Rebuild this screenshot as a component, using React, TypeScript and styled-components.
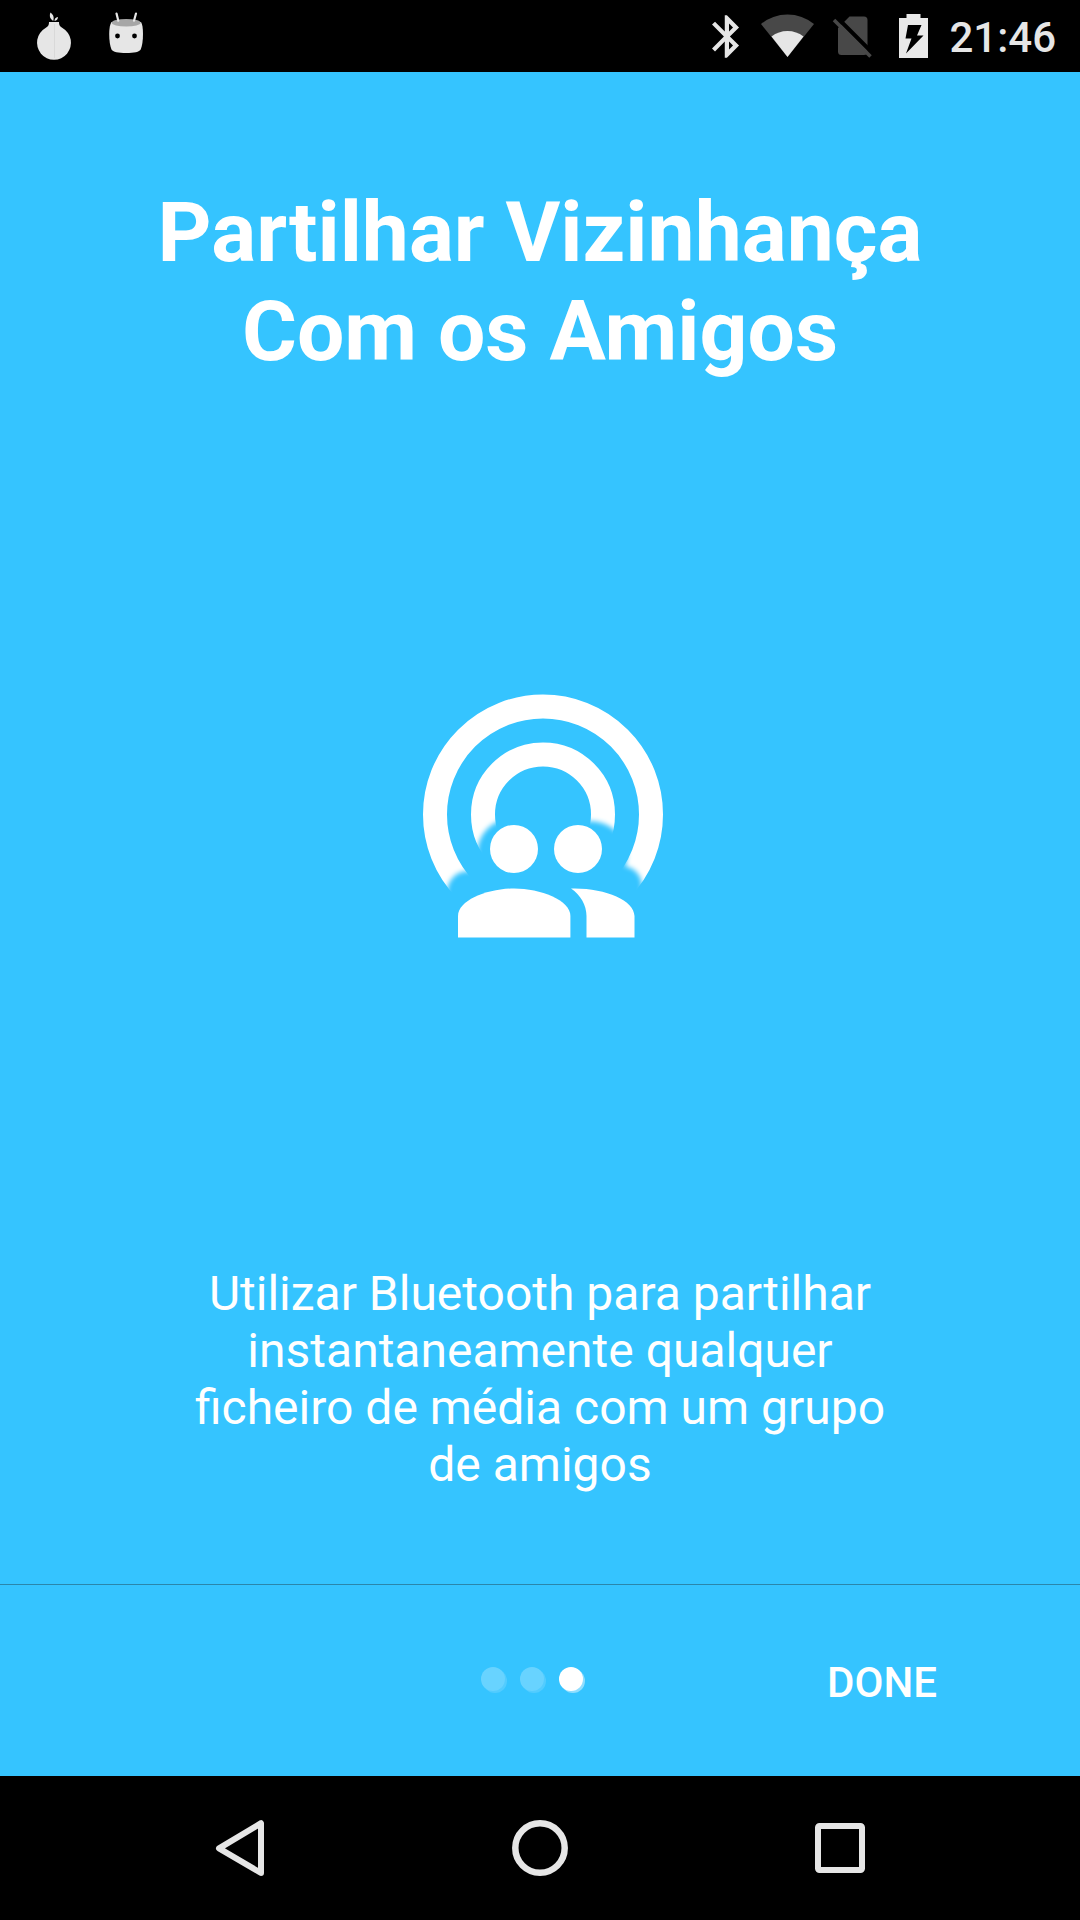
import React, { useState } from 'react';
import styled, { createGlobalStyle } from 'styled-components';

const GlobalStyle = createGlobalStyle`
  *, *::before, *::after { box-sizing: border-box; }
  body {
    margin: 0;
    background: #000;
    color: #fff;
    font-family: Roboto, "Noto Sans", sans-serif;
  }
  button { font: inherit; color: inherit; }
`;

const Screen = styled.div`
  display: flex;
  flex-direction: column;
  min-height: 100vh;
`;

const StatusBar = styled.header`
  display: flex;
  justify-content: space-between;
  height: 72px;
  padding: 0 24px;
  background: #000;
  color: #e6e6e6;
`;

const StatusGroup = styled.div<{ $gap?: number }>`
  display: flex;
  align-items: center;
  gap: ${({ $gap = 0 }) => $gap}px;
`;

const Clock = styled.time`
  padding: 4px 0 0 7px;
  font-size: 42px;
  line-height: 50px;
  font-weight: 500;
`;

const Slide = styled.main`
  flex: 1;
  display: flex;
  flex-direction: column;
  align-items: center;
  background: #35c4ff;
  padding: 111px 96px 91px;
  text-align: center;
`;

const Title = styled.h1`
  margin: 0;
  font-size: 84px;
  line-height: 99px;
  font-weight: 700;
`;

const Artwork = styled.div`
  flex: 1;
  display: flex;
  align-items: center;
  justify-content: center;
`;

const Description = styled.p`
  margin: 0;
  max-width: 704px;
  font-size: 48px;
  line-height: 57px;
`;

const Footer = styled.footer`
  display: grid;
  grid-template-columns: 1fr auto 1fr;
  align-items: center;
  height: 192px;
  background: #35c4ff;
  border-top: 1px solid #2b86ab;
`;

const Dots = styled.div`
  grid-column: 2;
  display: flex;
  gap: 15px;
  padding: 0 17px 3px 0;
`;

const Dot = styled.button<{ $active: boolean }>`
  width: 24px;
  height: 24px;
  padding: 0;
  border: 0;
  border-radius: 50%;
  background: ${({ $active }) => ($active ? '#fff' : '#68d3ff')};
  box-shadow: 2px 2px 0 ${({ $active }) => ($active ? '#90deff' : '#52ccff')};
`;

const DoneButton = styled.button`
  justify-self: end;
  margin-right: 119px;
  padding: 4px 24px 0;
  border: 0;
  background: none;
  font-size: 42px;
  line-height: 50px;
  font-weight: 500;
  text-transform: uppercase;
`;

const NavBar = styled.nav`
  display: flex;
  height: 144px;
  padding: 0 90px;
  background: #000;
`;

const NavButton = styled.button`
  flex: 1;
  display: flex;
  align-items: center;
  justify-content: center;
  padding: 0;
  border: 0;
  background: none;
  color: #e6e6e6;
`;

const OnionIcon = () => (
  <svg width="60" height="72" viewBox="24 0 60 72" fill="#e6e6e6" aria-hidden="true">
    <path d="M49 22h10c0 3 .6 4.500 3.500 6A17 17 0 1 1 45.500 28C48.400 26.500 49 25 49 22z" />
    <path d="M53.200 21C49.500 18.500 49.300 15.500 50.500 12.500c3.200 2.500 3.700 5 2.700 8.500z" />
    <path d="M54.500 21c0-2.500 1-3.500 3.500-4-.2 2.300-1.200 3.500-3.500 4z" />
    <path d="M54.500 24v34" stroke="#d9d9d9" strokeWidth="1" />
  </svg>
);

const MarshmallowIcon = () => (
  <svg width="60" height="72" viewBox="96 0 60 72" aria-hidden="true">
    <path d="M111.500 22h29.500c1.300 2 2 6 2 12s-.8 12-2.300 15.500C139.500 52 134 53 126.200 53s-13.500-1-14.700-3.500C110 46 109.200 40 109.200 34s.9-10 2.300-12z" fill="#e6e6e6" />
    <ellipse cx="126.200" cy="22.700" rx="14.500" ry="3.800" fill="#a6a6a6" />
    <path d="M116.500 13.500l1.800 7.200M136 13.500l-2 7.200" stroke="#e6e6e6" strokeWidth="2.200" strokeLinecap="round" />
    <circle cx="117.500" cy="36" r="2.400" />
    <circle cx="134.500" cy="36" r="2.400" />
  </svg>
);

const BluetoothIcon = () => (
  <svg width="62" height="72" viewBox="4 0 62 72" fill="#e6e6e6" aria-hidden="true">
    <path
      transform="translate(11.400 11) scale(2.125)"
      d="M17.710 7.710L12 2h-1v7.590L6.410 5 5 6.410 10.590 12 5 17.590 6.410 19 11 14.410V22h1l5.710-5.710-4.300-4.290 4.300-4.290zM13 5.830l1.880 1.880L13 9.590V5.830zm1.880 10.460L13 18.170v-3.760l1.880 1.880z"
    />
  </svg>
);

const WifiIcon = () => (
  <svg width="62" height="72" viewBox="66 0 62 72" aria-hidden="true">
    <path d="M97.500 57L71 24A42 42 0 0 1 124 24z" fill="#484848" />
    <path d="M97.500 57L81.500 36.500A26 26 0 0 1 113.500 36.500z" fill="#e6e6e6" />
  </svg>
);

const NoSimIcon = () => (
  <svg width="62" height="72" viewBox="128 0 62 72" aria-hidden="true">
    <path d="M159.500 16.500H174a3.500 3.500 0 0 1 3.500 3.500v31.500a3.500 3.500 0 0 1-3.500 3.500h-22.500a3.500 3.500 0 0 1-3.500-3.500V28z" fill="#484848" />
    <path d="M145.500 16L184 54.500" stroke="#000" strokeWidth="4" />
    <path d="M144 20l36.500 36.500" stroke="#484848" strokeWidth="3.600" />
  </svg>
);

const BatteryIcon = () => (
  <svg width="62" height="72" viewBox="190 0 62 72" aria-hidden="true">
    <path d="M216.500 14h14v4H238v40h-29V18h7.500z" fill="#e9e9e9" />
    <path d="M218 25h13.500l-4.500 10.500h6.500L216 53.500l5.500-15h-6z" />
  </svg>
);

const NearbyShareArt = () => (
  <svg width="288" height="288" viewBox="-4 -1 288 288" role="img" aria-label="Partilhar com amigos">
    <defs>
      <filter id="soft" x="-20%" y="-20%" width="140%" height="140%">
        <feGaussianBlur stdDeviation="2.500" />
      </filter>
      <mask id="cutout" maskUnits="userSpaceOnUse" x="0" y="0" width="280" height="280">
        <rect width="280" height="280" fill="#fff" />
        <g filter="url(#soft)">
          <circle cx="113" cy="174" r="36" />
          <ellipse cx="190" cy="176" rx="37" ry="35" />
          <rect x="78" y="172" width="140" height="90" />
          <circle cx="68" cy="212" r="21" />
          <circle cx="222" cy="206" r="20" />
          <rect x="0" y="214" width="280" height="70" />
        </g>
      </mask>
    </defs>
    <g mask="url(#cutout)" fill="none" stroke="#fff" strokeWidth="24">
      <circle cx="143" cy="134.500" r="108" />
      <circle cx="143" cy="134.500" r="60" />
    </g>
    <g fill="#fff">
      <circle cx="114" cy="169" r="24" />
      <circle cx="178" cy="169" r="24" />
      <path d="M58 257.500V236c0-16 30-27.500 56.200-27.500S170.400 220 170.400 236v21.500z" />
      <path d="M186.500 257.500V236c0-11-6-21-15.500-27.500 33-1 63.500 11.500 63.500 27.500v21.500z" />
    </g>
  </svg>
);

const BackIcon = () => (
  <svg width="60" height="60" viewBox="0 0 60 60" fill="none" stroke="currentColor" strokeWidth="6" strokeLinejoin="round" aria-hidden="true">
    <path d="M9 30.300L51 5.200V55z" />
  </svg>
);

const HomeIcon = () => (
  <svg width="60" height="60" viewBox="0 0 60 60" fill="none" stroke="currentColor" strokeWidth="6.500" aria-hidden="true">
    <circle cx="30" cy="30" r="24.700" />
  </svg>
);

const RecentsIcon = () => (
  <svg width="60" height="60" viewBox="0 0 60 60" fill="none" stroke="currentColor" strokeWidth="6" aria-hidden="true">
    <rect x="8" y="8" width="44" height="44" rx="1.500" />
  </svg>
);

const SLIDES = [0, 1, 2];

export default function App() {
  const [current, setCurrent] = useState(2);

  return (
    <>
      <GlobalStyle />
      <Screen>
        <StatusBar>
          <StatusGroup $gap={12}>
            <OnionIcon />
            <MarshmallowIcon />
          </StatusGroup>
          <StatusGroup>
            <BluetoothIcon />
            <WifiIcon />
            <NoSimIcon />
            <BatteryIcon />
            <Clock dateTime="21:46">21:46</Clock>
          </StatusGroup>
        </StatusBar>
        <Slide>
          <Title>Partilhar Vizinhança Com os Amigos</Title>
          <Artwork>
            <NearbyShareArt />
          </Artwork>
          <Description>
            Utilizar Bluetooth para partilhar instantaneamente qualquer ficheiro de média com um grupo de amigos
          </Description>
        </Slide>
        <Footer>
          <Dots>
            {SLIDES.map((slide) => (
              <Dot
                key={slide}
                type="button"
                $active={slide === current}
                aria-label={`${slide + 1}`}
                onClick={() => setCurrent(slide)}
              />
            ))}
          </Dots>
          <DoneButton type="button">Done</DoneButton>
        </Footer>
        <NavBar>
          <NavButton type="button" aria-label="Back">
            <BackIcon />
          </NavButton>
          <NavButton type="button" aria-label="Home">
            <HomeIcon />
          </NavButton>
          <NavButton type="button" aria-label="Recents">
            <RecentsIcon />
          </NavButton>
        </NavBar>
      </Screen>
    </>
  );
}
